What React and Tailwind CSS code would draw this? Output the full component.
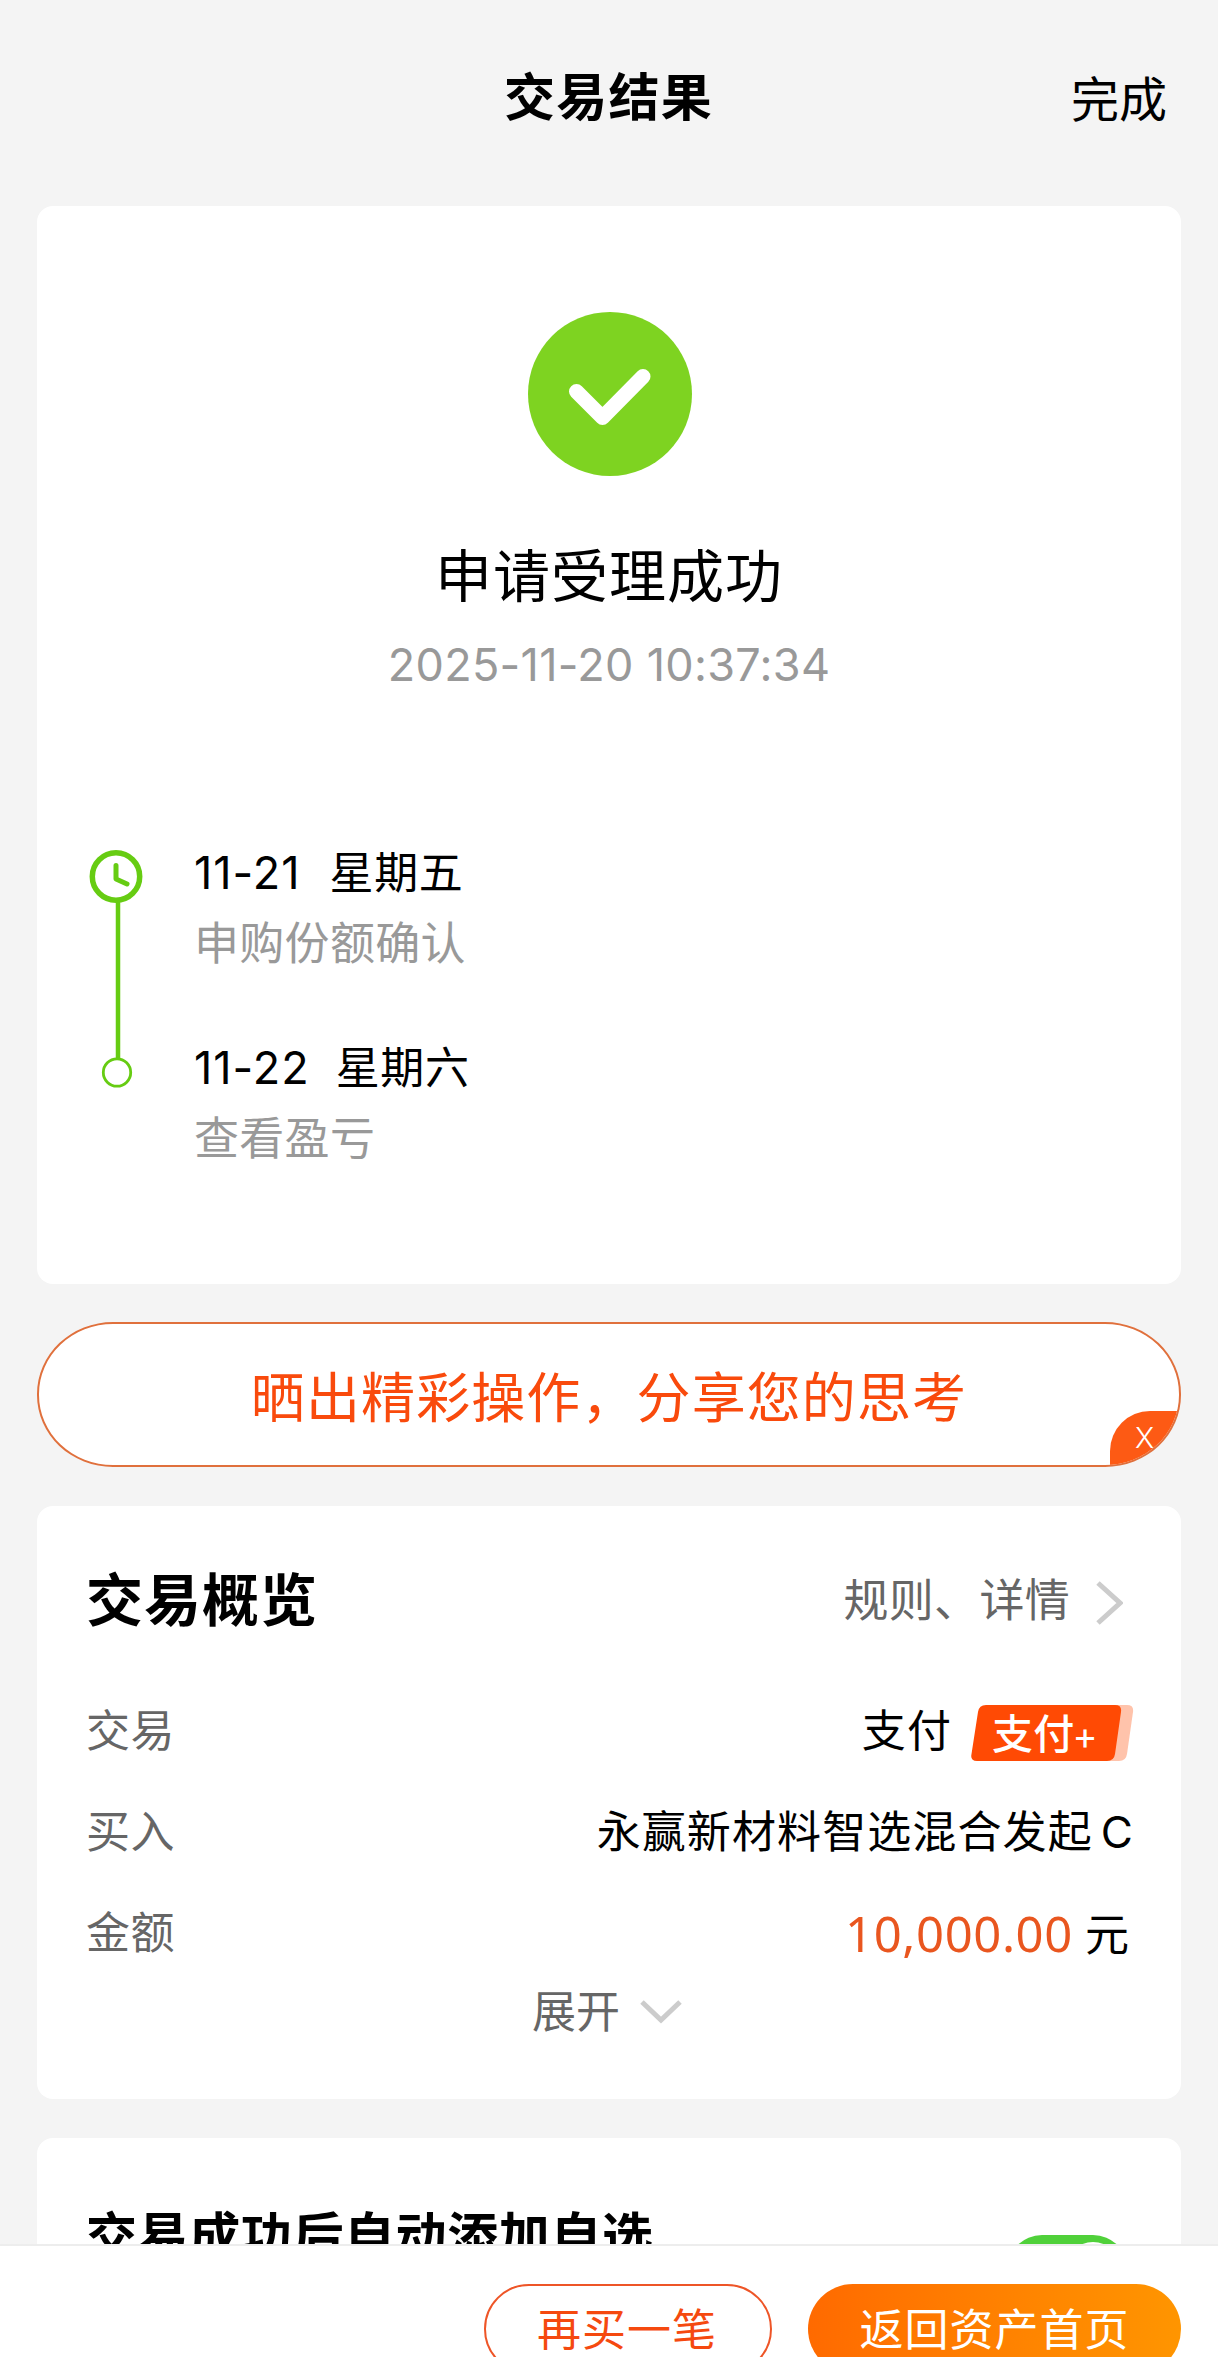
import { useState } from "react";

const steps = [
  { date: "11-21", day: "星期五", text: "申购份额确认", gap: "ml-[29px]" },
  { date: "11-22", day: "星期六", text: "查看盈亏", gap: "ml-[26px]" },
];

const SuccessIcon = () => (
  <svg className="ml-0.5" width="164" height="164" viewBox="0 0 164 164" fill="none">
    <circle cx="82" cy="82" r="82" fill="#7ed321" />
    <path
      d="M48.5 79.5L74.5 105.5L115 64.5"
      stroke="#fff"
      strokeWidth="15"
      strokeLinecap="round"
      strokeLinejoin="round"
    />
  </svg>
);

const TimelineTrack = () => (
  <svg width="54" height="238" viewBox="0 0 54 238" fill="none" stroke="#66cc12">
    <path d="M29 50V208" strokeWidth="4.5" />
    <circle cx="27" cy="26.5" r="23.7" strokeWidth="5.5" fill="#fff" />
    <path d="M27 15.5V29L38 34" strokeWidth="5" strokeLinecap="round" strokeLinejoin="round" />
    <circle cx="28" cy="222.5" r="13.7" strokeWidth="2.8" fill="#fff" />
  </svg>
);

const PayBadge = () => (
  <span className="relative mt-1 ml-[19px] flex h-14 w-[163px] items-center">
    <svg className="absolute inset-0" width="163" height="56" viewBox="0 0 163 56">
      <path d="M20 0H156Q163 0 162 7L156 49Q155 56 148 56H20Z" fill="#ffc3ab" />
      <path d="M15 0H144Q151 0 150 7L144 49Q143 56 136 56H6Q-1 56 0.500 49L7 7Q8 0 15 0Z" fill="#ff4a04" />
    </svg>
    <span className="relative mt-0.5 ml-[21px] text-[41px] leading-14 font-medium tracking-[0.2px] text-white">
      支付<span className="-ml-0.5 text-[38px] font-normal">+</span>
    </span>
  </span>
);

const Row = ({ label, children }) => (
  <div className="flex h-[60px] items-center justify-between">
    <span className="text-[44px] tracking-[0.5px] text-[#666]">{label}</span>
    <div className="flex items-center text-[44px] tracking-[1.1px] text-black">{children}</div>
  </div>
);

const App = () => {
  const [showShare, setShowShare] = useState(true);

  return (
    <div className="flex h-[2357px] w-[1218px] flex-col overflow-hidden bg-[#f4f4f4] font-['Inter','Noto_Sans_CJK_SC',sans-serif] text-black">
      <header className="flex h-[206px] shrink-0 items-start pt-[68px] pr-[51px]">
        <div className="w-[50px]" />
        <div className="flex-1" />
        <h1 className="text-[51px] leading-[60px] font-bold tracking-[1.2px]">交易结果</h1>
        <div className="flex-1 pt-0.5 text-right text-[48px] leading-[60px]">完成</div>
      </header>

      {/* Result */}
      <section className="mx-[37px] h-[1078px] shrink-0 rounded-2xl bg-white pt-[106px]">
        <div className="flex flex-col items-center">
          <SuccessIcon />
          <h2 className="mt-[71px] text-[57px] leading-[60px] tracking-[1px]">申请受理成功</h2>
          <p className="mt-[38px] text-[45px] leading-10 tracking-[0.3px] text-[#999]">2025-11-20 10:37:34</p>
        </div>

        <div className="mt-[165px] flex pl-[52px]">
          <TimelineTrack />
          <div className="-mt-0.5 ml-[51px] flex flex-col gap-[74px]">
            {steps.map((step) => (
              <div key={step.date} className="text-[44px] leading-[50px] tracking-[0.6px]">
                <div className="flex">
                  <span className="text-[45px] tracking-[1px]">{step.date}</span>
                  <span className={step.gap}>{step.day}</span>
                </div>
                <div className="mt-[21px] text-[45px] tracking-[0.3px] text-[#999]">{step.text}</div>
              </div>
            ))}
          </div>
        </div>
      </section>

      {/* Share banner */}
      {showShare && (
        <section className="relative mx-[37px] mt-[38px] flex h-[145px] shrink-0 items-center justify-center overflow-hidden rounded-[76px/72px] border-2 border-[#e0703c] bg-white">
          <span className="mt-2 text-[54px] leading-[60px] tracking-[1.1px] text-[#f94a0c]">晒出精彩操作，分享您的思考</span>
          <button
            onClick={() => setShowShare(false)}
            className="absolute right-0 bottom-0 h-[54px] w-[69px] rounded-tl-[40px] bg-[#fd5a14] text-[29px] leading-[54px] font-light text-white"
          >
            X
          </button>
        </section>
      )}

      {/* Overview */}
      <section className="mx-[37px] mt-[39px] h-[593px] shrink-0 rounded-2xl bg-white pt-[65px] pr-[47px] pl-[49px]">
        <div className="flex h-[60px] items-center justify-between">
          <h3 className="text-[57px] leading-[60px] font-bold tracking-[1px]">交易概览</h3>
          <div className="flex items-center text-[45px] tracking-[0.3px] text-[#666]">
            规则、详情
            <svg className="mt-1 mr-[11px] ml-[25px]" width="28" height="46" viewBox="0 0 28 46" fill="none">
              <path d="M3 3L25 23L3 43" stroke="#ccc" strokeWidth="5" />
            </svg>
          </div>
        </div>
        <div className="mt-[70px] flex flex-col gap-[41px]">
          <Row label="交易">
            支付
            <PayBadge />
          </Row>
          <Row label="买入">
            永赢新材料智选混合发起<span className="ml-2">C</span>
          </Row>
          <Row label="金额">
            <span className="mt-0.5 font-['Noto_Sans'] text-[49px] tracking-[0.6px] text-[#e9561f]">10,000.00</span>
            <span className="mt-1 mr-1 ml-3">元</span>
          </Row>
        </div>
        <div className="mt-[19px] flex h-[60px] items-center justify-center pr-1.5 text-[44px] text-[#666]">
          展开
          <svg className="ml-[20px]" width="42" height="26" viewBox="0 0 42 26" fill="none">
            <path d="M2 3L21 21L40 3" stroke="#ccc" strokeWidth="5" />
          </svg>
        </div>
      </section>

      {/* Watchlist */}
      <section className="mx-[37px] mt-[39px] flex h-[106px] shrink-0 items-start justify-between overflow-hidden rounded-t-2xl bg-white pr-[53px] pl-[49px]">
        <h3 className="mt-[69px] text-[51px] leading-[60px] font-bold tracking-[0.6px]">交易成功后自动添加自选</h3>
        <div className="mt-[97px] flex h-[70px] w-[121px] shrink-0 justify-end rounded-full bg-[#50d13a] p-[7px]">
          <div className="h-14 w-14 rounded-full bg-white" />
        </div>
      </section>

      <footer className="flex h-[180px] shrink-0 justify-end gap-9 border-t-2 border-[#ededed] bg-white pt-[38px] pr-[37px]">
        <button className="h-[90px] w-[288px] rounded-full border-2 border-[#ee5527] pt-0.5 pr-0.5 text-[44px] tracking-[1px] text-[#f5490f]">
          再买一笔
        </button>
        <button className="h-[90px] w-[373px] rounded-full bg-linear-to-r from-[#ff6a00] to-[#ff9500] pt-0.5 text-[44px] tracking-[1px] text-white">
          返回资产首页
        </button>
      </footer>
    </div>
  );
};

export default App;
